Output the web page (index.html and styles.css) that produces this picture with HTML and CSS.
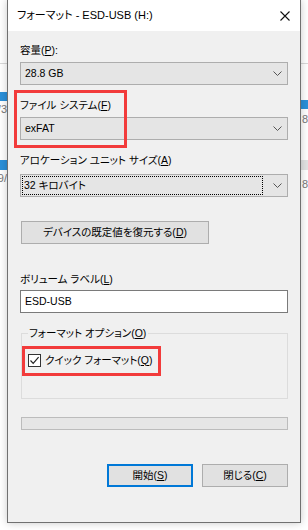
FILE: index.html
```html
<!DOCTYPE html>
<html lang="ja">
<head>
<meta charset="utf-8">
<link rel="stylesheet" href="styles.css">
</head>
<body>
<div class="backdrop">
  <div class="bd-line bd-l1"></div>
  <div class="bd-blue bd-l2"></div>
  <div class="bd-text bd-l3">3/</div>
  <div class="bd-blue bd-l4"></div>
  <div class="bd-text bd-l5">/9</div>
  <div class="bd-line bd-r1"></div>
  <div class="bd-blue bd-r2"></div>
  <div class="bd-text bd-r3">83</div>
  <div class="bd-gray bd-r4"></div>
  <div class="bd-text bd-r5">8.</div>
</div>
<div class="dialog">
  <div class="titlebar">
    <span class="title">フォーマット - ESD-USB (H:)</span>
    <svg class="close" width="10" height="10" viewBox="0 0 10 10"><path d="M0.5 0.5L9.5 9.5M9.5 0.5L0.5 9.5" stroke="#111" stroke-width="1.1" fill="none"/></svg>
  </div>
  <div class="content">
    <div class="label l1">容量(<u>P</u>):</div>
    <div class="combo c1"><span>28.8 GB</span><svg class="chev" width="9" height="5" viewBox="0 0 9 5"><path d="M0.5 0.5L4.5 4.5L8.5 0.5" stroke="#555" stroke-width="1" fill="none"/></svg></div>
    <div class="label l2">ファイル システム(<u>F</u>)</div>
    <div class="combo c2"><span>exFAT</span><svg class="chev" width="9" height="5" viewBox="0 0 9 5"><path d="M0.5 0.5L4.5 4.5L8.5 0.5" stroke="#555" stroke-width="1" fill="none"/></svg></div>
    <div class="label l3">アロケーション ユニット サイズ(<u>A</u>)</div>
    <div class="combo c3"><span class="focus">32 キロバイト</span><svg class="chev" width="9" height="5" viewBox="0 0 9 5"><path d="M0.5 0.5L4.5 4.5L8.5 0.5" stroke="#555" stroke-width="1" fill="none"/></svg></div>
    <div class="btn restore">デバイスの既定値を復元する(<u>D</u>)</div>
    <div class="label l4">ボリューム ラベル(<u>L</u>)</div>
    <div class="input">ESD-USB</div>
    <div class="group">
      <div class="legend">フォーマット オプション(<u>O</u>)</div>
      <div class="check-row">
        <span class="checkbox"><svg width="11" height="11" viewBox="0 0 11 11"><path d="M1.5 5.5L4.2 8.3L9.6 2.2" stroke="#222" stroke-width="1.2" fill="none"/></svg></span>
        <span class="check-label">クイック フォーマット(<u>Q</u>)</span>
      </div>
    </div>
    <div class="progress"></div>
    <div class="actions">
      <div class="btn act default">開始(<u>S</u>)</div>
      <div class="btn act">閉じる(<u>C</u>)</div>
    </div>
  </div>
  <div class="mark mark1"></div>
  <div class="mark mark2"></div>
</div>
</body>
</html>
```

FILE: styles.css
```css
html, body {
  margin: 0;
  padding: 0;
  background: #ffffff;
  width: 308px;
  height: 530px;
  overflow: hidden;
}
body {
  position: relative;
  font-family: "Liberation Sans", "Noto Sans CJK JP", sans-serif;
  font-size: 10.5px;
  line-height: 15px;
  color: #000;
  font-feature-settings: "palt";
}
u { text-decoration: underline; text-underline-offset: 1px; }

.backdrop { position: absolute; inset: 0; }
.bd-line { position: absolute; height: 1px; background: #d9d9d9; }
.bd-blue { position: absolute; background: #2b90d9; }
.bd-gray { position: absolute; background: #e3e3e3; }
.bd-text { position: absolute; font-size: 11px; color: #777; line-height: 12px; }
.bd-l1 { left: 0; width: 7px; top: 63px; }
.bd-l2 { left: 0; width: 7px; top: 92px; height: 9px; }
.bd-l3 { left: 0; top: 103px; width: 7px; overflow: hidden; direction: rtl; }
.bd-l4 { left: 0; width: 7px; top: 160px; height: 10px; }
.bd-l5 { left: 0; top: 172px; width: 7px; overflow: hidden; direction: rtl; }
.bd-r1 { left: 301px; width: 7px; top: 63px; }
.bd-r2 { left: 301px; width: 7px; top: 100px; height: 9px; }
.bd-r3 { left: 302px; top: 113px; width: 6px; overflow: hidden; }
.bd-r4 { left: 301px; width: 7px; top: 160px; height: 10px; }
.bd-r5 { left: 302px; top: 178px; width: 6px; overflow: hidden; }

.dialog {
  position: relative;
  margin-left: 7px;
  width: 292px;
  border: 1px solid #707070;
  border-top: none;
  background: #f0f0f0;
  box-shadow: 0 0 8px rgba(0,0,0,0.22);
}
.titlebar {
  height: 31px;
  background: #fff;
  display: flex;
  align-items: center;
  justify-content: space-between;
  padding: 0 10px 0 9px;
}
.title { color: #000; font-size: 11px; }

.content {
  padding: 12px 12px 35px 12px;
  display: flex;
  flex-direction: column;
}
.label { height: 15px; white-space: nowrap; }
.l2 { margin-top: 13px; }
.l3 { margin-top: 13px; }
.l4 { margin-top: 28px; }

.combo {
  height: 21px;
  border: 1px solid #adadad;
  background: #e5e5e5;
  display: flex;
  align-items: center;
  justify-content: space-between;
  padding: 0 5px 0 3px;
  margin-top: 4px;
}
.combo span { padding-left: 1px; }
.c3 { margin-top: 6px; padding-left: 1px; }
.combo .focus {
  flex: 1;
  margin-right: 10px;
  border: 1px dotted #000;
  height: 17px;
  line-height: 17px;
  padding-left: 1px;
}
.chev { flex: none; }

.btn {
  height: 21px;
  border: 1px solid #adadad;
  background: #e1e1e1;
  display: flex;
  align-items: center;
  justify-content: center;
}
.restore {
  margin-top: 24px;
  margin-left: 1px;
  width: 186px;
}
.input {
  margin-top: 3px;
  height: 21px;
  line-height: 21px;
  border: 1px solid #7a7a7a;
  background: #fff;
  padding-left: 4px;
}
.group {
  margin-top: 20px;
  margin-left: 1px;
  height: 64px;
  border: 1px solid #dcdcdc;
  padding: 0 0 0 6px;
}
.legend {
  width: fit-content;
  margin-top: -8px;
  background: #f0f0f0;
  padding: 0 2px 0 1px;
  height: 15px;
  white-space: nowrap;
}
.check-row {
  display: flex;
  align-items: center;
  margin-top: 11px;
  height: 16px;
}
.checkbox {
  width: 11px;
  height: 11px;
  border: 1px solid #333;
  background: #fff;
  display: flex;
  margin-right: 4px;
}
.progress {
  margin-top: 18px;
  margin-left: 1px;
  height: 11px;
  border: 1px solid #bcbcbc;
  background: #e6e6e6;
}
.actions {
  margin-top: 34px;
  display: flex;
  justify-content: flex-end;
  gap: 9px;
}
.act { width: 84px; }
.default { border: 2px solid #0078d7; height: 19px; width: 82px; }

.mark { position: absolute; border: 3px solid #f23b3b; }
.mark1 { left: 6px; top: 90px; width: 107px; height: 52px; }
.mark2 { left: 14px; top: 346px; width: 133px; height: 24px; }
```
